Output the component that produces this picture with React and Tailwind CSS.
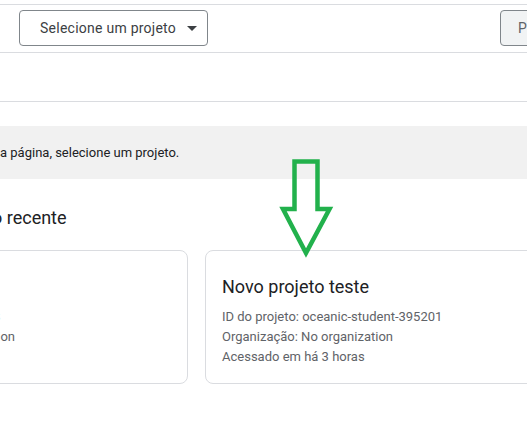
export default function App() {
  return (
    <div
      className="relative w-[527px] h-[444px] overflow-hidden bg-white text-[#202124]"
      style={{ fontFamily: 'Roboto, "Liberation Sans", sans-serif' }}
    >
      <div className="h-[4px]" />
      <div className="h-[49px] border-t border-b border-[#dadce0] flex items-start pt-[5px]">
        <button className="ml-[19px] w-[189px] h-[36px] shrink-0 rounded-[4px] border border-[#80868b] bg-white flex items-center pl-[20px] text-[14px] text-[#3c4043] tracking-[0.25px]">
          <span>Selecione um projeto</span>
          <svg viewBox="0 0 24 24" className="w-6 h-6 ml-[4px] fill-[#3c4043]">
            <path d="M7 10l5 5 5-5z" />
          </svg>
        </button>
        <button className="ml-[292px] w-[120px] h-[36px] shrink-0 rounded-[4px] border border-[#80868b] bg-[#f1f3f4] flex items-center pl-[17px] text-[14px] text-[#5f6368] tracking-[0.25px]">
          Projeto
        </button>
      </div>
      <div className="h-[49px] border-b border-[#dadce0]" />
      <div className="mt-[24px] h-[53px] bg-[#f1f1f1] flex items-center text-[13px] text-[#202124]">
        <span>a página, selecione um projeto.</span>
      </div>
      <div className="mt-[27px] h-[24px] leading-[24px] text-[18px] text-[#202124] ml-[-8px] whitespace-nowrap">
        o recente
      </div>
      <div className="mt-[20px] flex gap-[17px] ml-[-173px]">
        <div className="w-[361px] shrink-0 h-[134px] rounded-[8px] border border-[#dadce0] px-4 pt-6 pb-4 whitespace-nowrap">
          <div className="text-[18px] leading-[24px] text-[#202124]">My First Project</div>
          <div className="mt-[8px] text-[13px] leading-[20px] text-[#5f6368]">
            <div>ID do projeto: ringed-rune-3</div>
            <div>Organização: No organization</div>
            <div>Acessado em há 5 dias</div>
          </div>
        </div>
        <div className="w-[361px] shrink-0 h-[134px] rounded-[8px] border border-[#dadce0] px-4 pt-6 pb-4 whitespace-nowrap">
          <div className="text-[18px] leading-[24px] text-[#202124]">Novo projeto teste</div>
          <div className="mt-[8px] text-[13px] leading-[20px] text-[#5f6368]">
            <div>ID do projeto: oceanic-student-395201</div>
            <div>Organização: No organization</div>
            <div>Acessado em há 3 horas</div>
          </div>
        </div>
      </div>
      <svg
        className="absolute left-0 top-0 pointer-events-none"
        width="527"
        height="444"
        viewBox="0 0 527 444"
      >
        <path
          d="M294.5 161.5 H317.5 V209 H329.5 L306 253 L283 209 H294.5 Z"
          fill="none"
          stroke="#22b14c"
          strokeWidth="4.5"
          strokeLinejoin="miter"
        />
      </svg>
    </div>
  );
}
